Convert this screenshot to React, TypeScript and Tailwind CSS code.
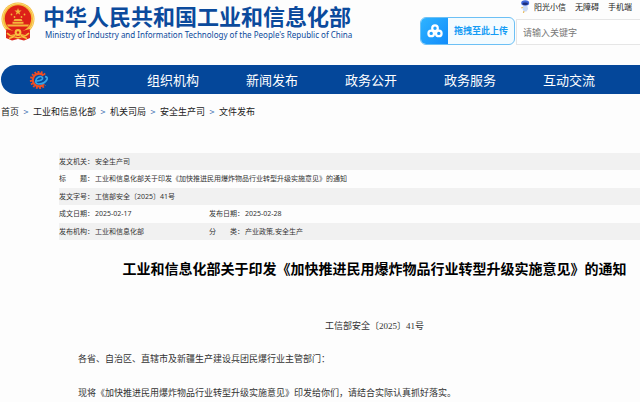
import React from "react";

type DocumentField = {
  label: string;
  value: string;
};

const topLinks = ["阳光小信", "无障碍", "手机端"];

const navItems = ["首页", "组织机构", "新闻发布", "政务公开", "政务服务", "互动交流"];

const breadcrumbs = ["首页", "工业和信息化部", "机关司局", "安全生产司", "文件发布"];

const documentRows: DocumentField[][] = [
  [{ label: "发文机关：", value: "安全生产司" }],
  [
    {
      label: "标　　题：",
      value: "工业和信息化部关于印发《加快推进民用爆炸物品行业转型升级实施意见》的通知",
    },
  ],
  [{ label: "发文字号：", value: "工信部安全〔2025〕41号" }],
  [
    { label: "成文日期：", value: "2025-02-17" },
    { label: "发布日期：", value: "2025-02-28" },
  ],
  [
    { label: "发布机构：", value: "工业和信息化部" },
    { label: "分　　类：", value: "产业政策,安全生产" },
  ],
];

function NationalEmblem() {
  return (
    <svg viewBox="0 0 36 40" className="h-10 w-9 shrink-0" aria-hidden="true">
      <path d="M6 27 L30 27 L30 36 L24 38.5 L18 37 L12 38.5 L6 36 Z" fill="#e02a1c" />
      <circle cx="18" cy="17" r="16.5" fill="#f6b93a" />
      <circle cx="18" cy="17" r="15.6" fill="none" stroke="#fbd977" strokeWidth="1" />
      <circle cx="18" cy="16.5" r="13.2" fill="#dd2018" />
      <path
        d="M18 6 L18.9 8.6 L21.6 8.6 L19.4 10.2 L20.2 12.8 L18 11.2 L15.8 12.8 L16.6 10.2 L14.4 8.6 L17.1 8.6 Z"
        fill="#f5b93c"
      />
      <g fill="#f5b53a">
        <circle cx="11.5" cy="12.5" r="0.9" />
        <circle cx="24.5" cy="12.5" r="0.9" />
        <circle cx="14.5" cy="15" r="0.9" />
        <circle cx="21.5" cy="15" r="0.9" />
        <path d="M14.5 17 L21.5 17 L22.5 19 L13.5 19 Z M12.5 19.8 L23.5 19.8 L23.5 21.8 L12.5 21.8 Z M7 22.6 L29 22.6 L28 24.6 L8 24.6 Z" />
      </g>
      <path d="M6 27 Q18 31 30 27 L29 31 Q18 34 7 31 Z" fill="#dd2018" />
      <circle cx="18" cy="30.5" r="3.4" fill="#f8c13d" />
      <circle cx="18" cy="30.5" r="1.2" fill="#dd2018" />
      <path
        d="M7 31 Q12 36 15 33 M29 31 Q24 36 21 33 M9 36.5 L14 34.5 L18 36 L22 34.5 L27 36.5"
        fill="none"
        stroke="#f8c13d"
        strokeWidth="1.6"
      />
    </svg>
  );
}

function GearLogo() {
  return (
    <svg viewBox="0 0 20 20" className="size-5 shrink-0" fill="none" aria-hidden="true">
      <path
        d="M16 4.8 A8 8 0 1 0 16.2 15"
        stroke="#f04e23"
        strokeWidth="2.2"
        strokeDasharray="1.8 1.4"
      />
      <path d="M14.6 5.6 A6.3 6.3 0 1 0 14.8 14.2" stroke="#f04e23" strokeWidth="2.2" />
      <path
        d="M6.5 11.2 Q14.5 10.5 13.5 7.6 Q11 5 7.6 8.6 Q5.2 13.2 9.2 14 Q15.5 14.2 18 9.5 Q19 6.8 16 6.6"
        stroke="#35a3e6"
        strokeWidth="1.7"
      />
    </svg>
  );
}

function RobotIcon() {
  return (
    <svg viewBox="0 0 10 13" className="h-[13px] w-2.5 shrink-0" aria-hidden="true">
      <ellipse cx="5.2" cy="3" rx="4" ry="2.8" fill="#3f66d8" />
      <ellipse cx="5.2" cy="3.8" rx="2.8" ry="1.3" fill="#1c2c75" />
      <path d="M3.2 6 H7.4 L8.2 9 L6.4 11.4 H4 L2.4 9 Z" fill="#c9daf5" />
      <path d="M1.2 8 L3 7.2 M4 11 L3.4 13" stroke="#e8bd62" strokeWidth="1.2" />
    </svg>
  );
}

function CloudIcon() {
  return (
    <svg viewBox="0 0 18 16" className="h-4 w-4.5" fill="none" stroke="white" strokeWidth="2.2" aria-hidden="true">
      <circle cx="9" cy="5.2" r="2.8" />
      <circle cx="5.2" cy="10.4" r="2.8" />
      <circle cx="12.8" cy="10.4" r="2.8" />
    </svg>
  );
}

function SiteHeader() {
  return (
    <header className="flex h-[65px] items-start">
      <a href="#" className="flex items-start gap-[7px] pt-0.5 text-[#0b4a9c]">
        <NationalEmblem />
        <span className="flex flex-col whitespace-nowrap pt-1">
          <span className="font-['Liberation_Sans','Noto_Sans_CJK_SC',sans-serif] text-[22px] leading-6 font-bold">
            中华人民共和国工业和信息化部
          </span>
          <span className="pl-0.5 font-['Noto_Sans',sans-serif] text-[8px] leading-[10px]">
            Ministry of Industry and Information Technology of the People's Republic of China
          </span>
        </span>
      </a>

      <div className="ml-auto flex w-[220px] flex-col gap-1">
        <div className="flex h-[13px] items-center gap-[9px] self-end pr-2 text-[8px] whitespace-nowrap text-[#222]">
          <span className="flex items-center gap-1">
            <RobotIcon />
            <a href="#">{topLinks[0]}</a>
          </span>
          {topLinks.slice(1).map((link) => (
            <a key={link} href="#">
              {link}
            </a>
          ))}
        </div>
        <div className="flex items-start gap-px">
          <button
            type="button"
            className="flex h-7 w-[95px] shrink-0 items-center overflow-hidden rounded-md border border-[#6cc0f5] bg-[#f3fbff] text-[#139cf5]"
          >
            <span className="flex h-7 w-[27px] shrink-0 items-center justify-center bg-linear-to-br from-[#2fb4ff] to-[#128bfb]">
              <CloudIcon />
            </span>
            <span className="pl-1.5 text-[9px] font-bold whitespace-nowrap">拖拽至此上传</span>
          </button>
          <input
            type="text"
            aria-label="请输入关键字"
            placeholder="请输入关键字"
            className="mt-0.5 h-[26px] min-w-0 flex-1 border border-r-0 border-[#e6e6e6] bg-white px-1.5 text-[9px] placeholder:text-[#777]"
          />
        </div>
      </div>
    </header>
  );
}

export default function App() {
  return (
    <div className="overflow-hidden bg-[#fdfdfd] font-['Noto_Sans_CJK_SC',sans-serif] text-[#333]">
      <SiteHeader />

      <nav className="ml-px flex h-[29px] items-center rounded-l-full bg-[#04479a] pl-7 text-[13px] whitespace-nowrap text-white">
        <GearLogo />
        <div className="ml-[25px] flex gap-[47px]">
          {navItems.map((item) => (
            <a key={item} href="#">
              {item}
            </a>
          ))}
        </div>
      </nav>

      <nav aria-label="breadcrumb" className="mt-3 flex h-3 items-center pl-px text-[9px] text-[#222]">
        {breadcrumbs.map((crumb, index) => (
          <React.Fragment key={crumb}>
            {index > 0 && <span className="w-3.5 text-center text-[#3a6db0]">&gt;</span>}
            <a href="#">{crumb}</a>
          </React.Fragment>
        ))}
      </nav>

      <main className="pt-[35px]">
        <table className="ml-[59px] w-[calc(100%-59px)] table-fixed border-collapse font-['Noto_Sans','Noto_Sans_CJK_SC',sans-serif] text-[7px] leading-4 text-[#333]">
          <colgroup>
            <col className="w-9" />
            <col className="w-[114px]" />
            <col className="w-9" />
            <col />
          </colgroup>
          <tbody>
            {documentRows.map((fields) => (
              <tr key={fields[0].label} className="h-[18px] odd:h-[17px] odd:bg-[#f1f1f1]">
                {fields.map((field) => (
                  <React.Fragment key={field.label}>
                    <th scope="row" className="p-0 text-left font-normal whitespace-nowrap">
                      {field.label}
                    </th>
                    <td className="p-0 whitespace-nowrap" colSpan={fields.length === 1 ? 3 : 1}>
                      {field.value}
                    </td>
                  </React.Fragment>
                ))}
              </tr>
            ))}
          </tbody>
        </table>

        <article className="pb-1">
          <h1 className="mt-[18px] pl-[109px] text-center text-[14px] leading-5 font-bold whitespace-nowrap text-black">
            工业和信息化部关于印发《加快推进民用爆炸物品行业转型升级实施意见》的通知
          </h1>
          <div className="font-['Liberation_Serif','Noto_Sans_CJK_SC',serif] text-[9px] leading-4">
            <p className="mt-10 pl-[109px] text-center">工信部安全〔2025〕41号</p>
            <p className="mt-[17px] pl-[78px]">各省、自治区、直辖市及新疆生产建设兵团民爆行业主管部门：</p>
            <p className="mt-[18px] pl-[78px]">
              现将《加快推进民用爆炸物品行业转型升级实施意见》印发给你们，请结合实际认真抓好落实。
            </p>
          </div>
        </article>
      </main>
    </div>
  );
}
